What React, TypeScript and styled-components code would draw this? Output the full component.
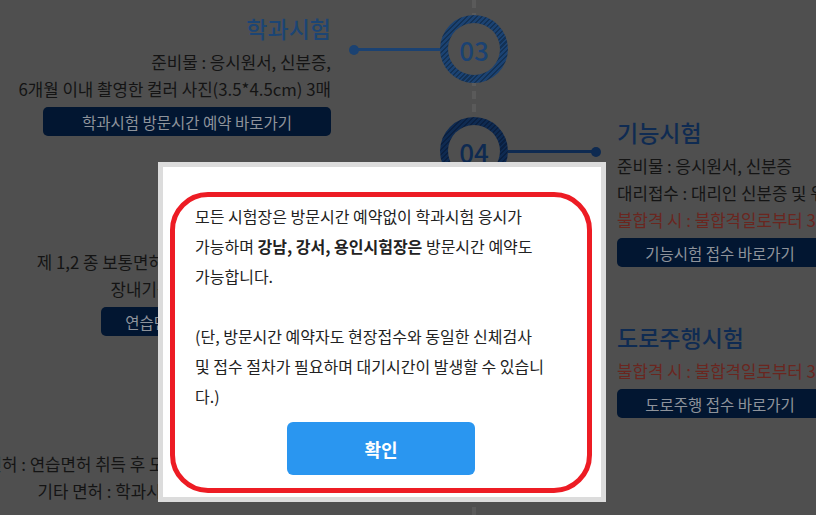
import React from 'react';
import styled, { createGlobalStyle } from 'styled-components';

const Global = createGlobalStyle`
  html, body { margin: 0; padding: 0; background: #4f4f4f; overflow: hidden; }
  body { font-family: "Noto Sans CJK KR", "Noto Sans", sans-serif; }
`;

type Side = 'left' | 'right';
type Tone = 'active' | 'navy';

const ringColor = (t: Tone) => (t === 'active' ? '#1b4272' : '#0e2a51');
const ringStripe = (t: Tone) => (t === 'active' ? '#133154' : '#0a1f3f');

const Page = styled.div`
  position: relative;
  width: 816px;
  height: 515px;
  overflow: hidden;
  background: #4f4f4f;
`;

const Timeline = styled.div`
  display: grid;
  grid-template-columns: 331px 286px 1fr;
  height: 100%;
`;

const SideColumn = styled.div<{ $side: Side }>`
  display: flex;
  flex-direction: column;
  align-items: ${(p) => (p.$side === 'left' ? 'flex-end' : 'flex-start')};
  min-width: 0;
`;

const Block = styled.div<{ $side: Side; $mt: number }>`
  display: flex;
  flex-direction: column;
  align-items: ${(p) => (p.$side === 'left' ? 'flex-end' : 'flex-start')};
  margin-top: ${(p) => p.$mt}px;
  flex-shrink: 0;
`;

const Heading = styled.h3<{ $tone: Tone }>`
  margin: 0 0 6px;
  font-size: 23px;
  line-height: 30px;
  font-weight: 500;
  white-space: nowrap;
  color: ${(p) => (p.$tone === 'active' ? '#1c4574' : '#0f2b52')};
`;

const Line = styled.p<{ $warn?: boolean }>`
  margin: 0;
  font-size: 16.8px;
  line-height: 27px;
  white-space: nowrap;
  color: ${(p) => (p.$warn ? '#6a261f' : '#141414')};
`;

const LinkButton = styled.a<{ $width: number }>`
  margin-top: 4px;
  width: ${(p) => p.$width}px;
  height: 29px;
  flex-shrink: 0;
  display: flex;
  align-items: center;
  justify-content: center;
  background: #021631;
  color: #8e939b;
  border-radius: 5px;
  font-size: 15.5px;
  text-decoration: none;
  white-space: nowrap;
`;

const Spine = styled.div`
  display: flex;
  flex-direction: column;
  align-items: center;
  gap: 34px;
  padding-top: 15px;
  background-image: repeating-linear-gradient(to bottom, #5a5a5a 0 8px, transparent 8px 13px);
  background-size: 4px 100%;
  background-position: center top;
  background-repeat: no-repeat;
`;

const Step = styled.div<{ $tone: Tone }>`
  position: relative;
  width: 68px;
  height: 68px;
  flex-shrink: 0;
  border-radius: 50%;
  background: repeating-linear-gradient(
    135deg,
    ${(p) => ringColor(p.$tone)} 0 2px,
    ${(p) => ringStripe(p.$tone)} 2px 3.5px
  );
  display: flex;
  align-items: center;
  justify-content: center;
`;

const StepNumber = styled.div<{ $tone: Tone }>`
  width: 52px;
  height: 52px;
  border-radius: 50%;
  background: #4f4f4f;
  display: flex;
  align-items: center;
  justify-content: center;
  font-size: 26px;
  font-weight: 500;
  color: ${(p) => ringColor(p.$tone)};
`;

const Connector = styled.span<{ $side: Side; $tone: Tone }>`
  position: absolute;
  top: 50%;
  margin-top: -1px;
  height: 3px;
  width: ${(p) => (p.$side === 'left' ? 86 : 88)}px;
  ${(p) => (p.$side === 'left' ? 'right: 100%;' : 'left: 100%;')}
  background: ${(p) => ringColor(p.$tone)};
  &::after {
    content: '';
    position: absolute;
    top: 50%;
    width: 10px;
    height: 10px;
    border-radius: 50%;
    transform: translateY(-50%);
    background: ${(p) => ringColor(p.$tone)};
    ${(p) => (p.$side === 'left' ? 'left: -5px;' : 'right: -5px;')}
  }
`;

const Dialog = styled.div`
  position: absolute;
  left: 158px;
  top: 162px;
  width: 448px;
  height: 340px;
  box-sizing: border-box;
  border: 5px solid #dcdcdc;
  background: #fff;
  padding: 25px 9px 4px 7px;
`;

const Notice = styled.div`
  box-sizing: border-box;
  height: 100%;
  border: 5px solid #ed1c24;
  border-radius: 38px;
  padding: 4px 20px 13px 20px;
  display: flex;
  flex-direction: column;
`;

const Message = styled.p`
  margin: 0;
  font-size: 16px;
  line-height: 30px;
  color: #222;
  white-space: nowrap;
  strong { font-weight: 700; }
`;

const ConfirmButton = styled.button`
  margin-top: 11px;
  align-self: center;
  width: 188px;
  height: 53px;
  border: 0;
  border-radius: 6px;
  background: #2a96f0;
  color: #fff;
  font-family: inherit;
  font-size: 18px;
  font-weight: 700;
  cursor: pointer;
`;

const steps: { n: string; side: Side; tone: Tone }[] = [
  { n: '03', side: 'left', tone: 'active' },
  { n: '04', side: 'right', tone: 'navy' },
  { n: '05', side: 'left', tone: 'navy' },
  { n: '06', side: 'right', tone: 'navy' },
  { n: '07', side: 'left', tone: 'navy' },
];

export default function App() {
  return (
    <Page>
      <Global />
      <Timeline>
        <SideColumn $side="left">
          <Block $side="left" $mt={13}>
            <Heading $tone="active">학과시험</Heading>
            <Line>준비물 : 응시원서, 신분증,</Line>
            <Line>6개월 이내 촬영한 컬러 사진(3.5*4.5cm) 3매</Line>
            <LinkButton $width={288}>학과시험 방문시간 예약 바로가기</LinkButton>
          </Block>
          <Block $side="left" $mt={77}>
            <Heading $tone="navy">연습면허</Heading>
            <Line>제 1,2 종 보통면허 : 학과시험 합격 후 가능.</Line>
            <Line>장내기능시험 : 학과시험 합격 후</Line>
            <LinkButton $width={230}>연습면허 발급 예약 바로가기</LinkButton>
          </Block>
          <Block $side="left" $mt={79}>
            <Heading $tone="navy">면허증 발급</Heading>
            <Line>제 1,2 종 보통면허 : 연습면허 취득 후 도로주행시험 응시 가능함.</Line>
            <Line>기타 면허 : 학과시험 및 기능시험 합격자 등</Line>
          </Block>
        </SideColumn>

        <Spine>
          {steps.map((s) => (
            <Step key={s.n} $tone={s.tone}>
              <Connector $side={s.side} $tone={s.tone} />
              <StepNumber $tone={s.tone}>{s.n}</StepNumber>
            </Step>
          ))}
        </Spine>

        <SideColumn $side="right">
          <Block $side="right" $mt={117}>
            <Heading $tone="navy">기능시험</Heading>
            <Line>준비물 : 응시원서, 신분증</Line>
            <Line>대리접수 : 대리인 신분증 및 위임장</Line>
            <Line $warn>불합격 시 : 불합격일로부터 3일 경과 후 재응시 가능</Line>
            <LinkButton $width={206}>기능시험 접수 바로가기</LinkButton>
          </Block>
          <Block $side="right" $mt={55}>
            <Heading $tone="navy">도로주행시험</Heading>
            <Line $warn>불합격 시 : 불합격일로부터 3일 경과 후 재응시 가능</Line>
            <LinkButton $width={206}>도로주행 접수 바로가기</LinkButton>
          </Block>
        </SideColumn>
      </Timeline>

      <Dialog role="dialog">
        <Notice>
          <Message>
            모든 시험장은 방문시간 예약없이 학과시험 응시가
            <br />
            가능하며 <strong>강남, 강서, 용인시험장은</strong> 방문시간 예약도
            <br />
            가능합니다.
            <br />
            <br />
            (단, 방문시간 예약자도 현장접수와 동일한 신체검사
            <br />
            및 접수 절차가 필요하며 대기시간이 발생할 수 있습니
            <br />
            다.)
          </Message>
          <ConfirmButton type="button">확인</ConfirmButton>
        </Notice>
      </Dialog>
    </Page>
  );
}
